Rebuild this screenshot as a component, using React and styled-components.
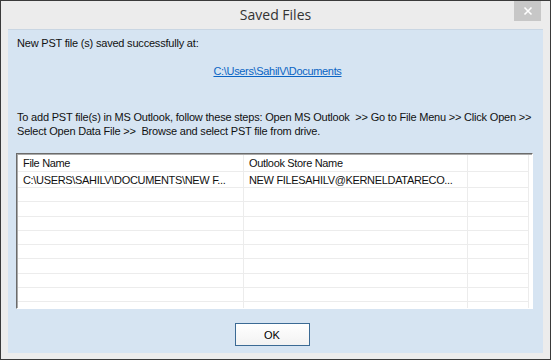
import React from 'react'
import styled, { createGlobalStyle } from 'styled-components'

const GlobalStyle = createGlobalStyle`
  html, body {
    margin: 0;
    padding: 0;
    background: #ffffff;
  }
  * {
    box-sizing: border-box;
  }
`

const Window = styled.div`
  width: 551px;
  height: 360px;
  border: 1px solid #3a3a3a;
  background: #ececec;
  display: flex;
  flex-direction: column;
  font-family: 'Liberation Sans', Arial, sans-serif;
  font-size: 11px;
  letter-spacing: -0.33px;
  color: #111;
`

const TitleBar = styled.div`
  height: 28px;
  display: grid;
  grid-template-columns: 1fr auto 1fr;
  align-items: start;
`

const Title = styled.div`
  grid-column: 2;
  font-family: 'Open Sans', 'Noto Sans', sans-serif;
  font-size: 14px;
  letter-spacing: 0;
  color: #333;
  line-height: 28px;
`

const CloseButton = styled.div`
  grid-column: 3;
  justify-self: end;
  width: 27px;
  height: 20px;
  margin-right: 9px;
  background: #c7c7c7;
  color: #fff;
  display: flex;
  align-items: center;
  justify-content: center;
`

const Frame = styled.div`
  flex: 1;
  padding: 0 7px 7px 7px;
  display: flex;
`

const Client = styled.div`
  flex: 1;
  background: #d6e4f2;
  border-top: 1px solid #c9d6e3;
  padding: 6px 9px 7px 9px;
  display: flex;
  flex-direction: column;
`

const Line = styled.div`
  line-height: 14px;
  white-space: nowrap;
  letter-spacing: -0.2px;
  margin-top: ${props => props.gap || 0}px;
`

const LinkRow = styled.div`
  text-align: center;
  line-height: 14px;
  margin-top: 14px;
  padding-left: 4px;
`

const PathLink = styled.a`
  color: #0b64c4;
  text-decoration: underline;
  cursor: pointer;
`

const ListBox = styled.div`
  margin: 15px 1px 0 -1px;
  height: 156px;
  background: #fff;
  border: 1px solid;
  border-color: #6b6b6b #ffffff #ffffff #6b6b6b;
  box-shadow: inset 1px 1px 0 #a9a9a9;
  overflow: hidden;
  padding: 1px 0 0 1px;
`

const Row = styled.div`
  display: grid;
  grid-template-columns: 226px 224px 1fr;
  height: ${props => props.header ? 17 : 14.3}px;
  ${props => props.first ? 'height: 16px;' : ''}
  border-bottom: 1px solid #ececec;
  margin-right: 3px;
`

const Cell = styled.div`
  padding-left: 5px;
  display: flex;
  align-items: center;
  white-space: nowrap;
  overflow: hidden;
  border-right: 1px solid #ececec;
`

const ButtonBar = styled.div`
  margin-top: 14px;
  display: flex;
  justify-content: center;
`

const Button = styled.button`
  width: 75px;
  height: 23px;
  border: 1px solid #3b6a94;
  background: linear-gradient(#ffffff, #f2f2f2);
  font-family: 'Liberation Sans', Arial, sans-serif;
  font-size: 11px;
  color: #000;
  padding: 0;
  margin-right: 7px;
`

const emptyRows = Array.from({ length: 9 })

export default function App() {
  return (
    <>
      <GlobalStyle />
      <Window>
        <TitleBar>
          <Title>Saved Files</Title>
          <CloseButton>
            <svg width="10" height="10" viewBox="0 0 10 10">
              <path d="M1.5 1.5 L8.5 8.5 M8.5 1.5 L1.5 8.5" stroke="#fff" strokeWidth="1.6" />
            </svg>
          </CloseButton>
        </TitleBar>
        <Frame>
          <Client>
            <Line>New PST file (s) saved successfully at:</Line>
            <LinkRow>
              <PathLink>C:\Users\SahilV\Documents</PathLink>
            </LinkRow>
            <Line gap={32}>
              To add PST file(s) in MS Outlook, follow these steps: Open MS Outlook&nbsp; &gt;&gt; Go to File Menu &gt;&gt; Click Open &gt;&gt;
            </Line>
            <Line>Select Open Data File &gt;&gt;&nbsp; Browse and select PST file from drive.</Line>
            <ListBox>
              <Row header>
                <Cell>File Name</Cell>
                <Cell>Outlook Store Name</Cell>
                <Cell />
              </Row>
              <Row first>
                <Cell>C:\USERS\SAHILV\DOCUMENTS\NEW F...</Cell>
                <Cell>NEW FILESAHILV@KERNELDATARECO...</Cell>
                <Cell />
              </Row>
              {emptyRows.map((_, i) => (
                <Row key={i}>
                  <Cell />
                  <Cell />
                  <Cell />
                </Row>
              ))}
            </ListBox>
            <ButtonBar>
              <Button>OK</Button>
            </ButtonBar>
          </Client>
        </Frame>
      </Window>
    </>
  )
}
